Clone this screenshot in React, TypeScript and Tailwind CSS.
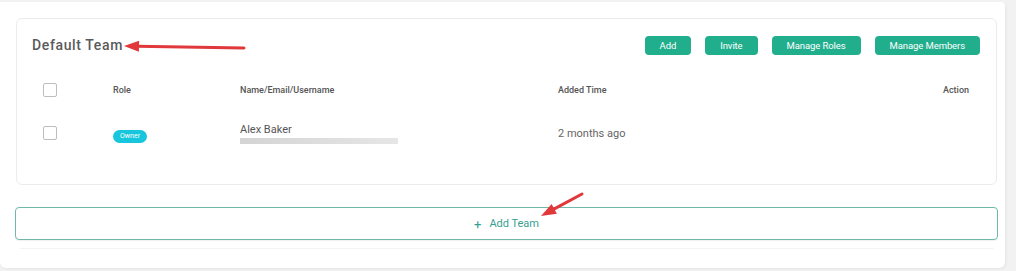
import React from "react";

const buttons = ["Add", "Invite", "Manage Roles", "Manage Members"];

function Checkbox() {
  return <span className="block h-[14px] w-[14px] rounded-[2px] border border-[#bdbdbd] bg-white" />;
}

function RedArrow({ className, x1, y1, x2, y2 }: { className: string; x1: number; y1: number; x2: number; y2: number }) {
  // arrow pointing to (x2, y2)
  const dx = x2 - x1;
  const dy = y2 - y1;
  const len = Math.sqrt(dx * dx + dy * dy);
  const ux = dx / len;
  const uy = dy / len;
  const hl = 15;
  const hw = 5.5;
  const bx = x2 - ux * hl;
  const by = y2 - uy * hl;
  const p1 = `${bx - uy * hw},${by + ux * hw}`;
  const p2 = `${bx + uy * hw},${by - ux * hw}`;
  return (
    <svg className={className} width="140" height="40" viewBox="0 0 140 40">
      <line x1={x1} y1={y1} x2={bx + ux * 2} y2={by + uy * 2} stroke="#e0383b" strokeWidth="3" strokeLinecap="round" />
      <polygon points={`${x2},${y2} ${p1} ${p2}`} fill="#e0383b" />
    </svg>
  );
}

export default function App() {
  return (
    <div className="h-[271px] w-[1016px] overflow-hidden bg-[#f2f2f2] pt-[2px] font-['Roboto',sans-serif]">
      <div className="relative h-[266px] w-[1005px] rounded-b-[6px] rounded-tr-[4px] bg-white pl-[16px] pr-[8px] pt-[16px] shadow-[1px_1px_3px_rgba(0,0,0,0.06)]">
        <div className="h-[167px] rounded-[6px] border border-[#ececec] bg-white">
          <div className="flex h-[52px] items-center justify-between pl-[15px] pr-[16px]">
            <h2 className="text-[14px] font-medium tracking-[0.045em] text-[#5a5a5a]">Default Team</h2>
            <div className="flex gap-[14px]">
              {buttons.map((b) => (
                <button
                  key={b}
                  className="h-[19px] rounded-[4px] bg-[#21ae8d] px-[15px] text-[9.5px] leading-[19px] tracking-[-0.01em] text-white"
                >
                  {b}
                </button>
              ))}
            </div>
          </div>
          <div className="grid grid-cols-[70px_127px_318px_1fr_auto] items-center pl-[26px] pr-[27px] text-[9px] font-medium text-[#555]">
            <div className="flex h-[38px] items-center">
              <Checkbox />
            </div>
            <div className="pt-[2px]">Role</div>
            <div className="pt-[2px]">Name/Email/Username</div>
            <div className="pt-[2px]">Added Time</div>
            <div className="pt-[2px]">Action</div>
          </div>
          <div className="grid grid-cols-[70px_127px_318px_1fr_auto] items-center pl-[26px] pr-[27px]">
            <div className="flex h-[48px] items-center">
              <Checkbox />
            </div>
            <div>
              <span className="inline-block h-[13px] rounded-full bg-[#17c6dc] px-[7px] text-[7px] leading-[13px] text-white">
                Owner
              </span>
            </div>
            <div>
              <div className="text-[11px] leading-[14px] text-[#555]">Alex Baker</div>
              <div className="mt-[1px] h-[6px] w-[158px] bg-gradient-to-r from-[#d4d4d4] to-[#e6e6e6]" />
            </div>
            <div className="pt-[3px] text-[11px] text-[#666]">2 months ago</div>
            <div />
          </div>
        </div>
        <button className="mt-[22px] -ml-[1px] flex h-[33px] w-[983px] items-center justify-center gap-[8px] rounded-[4px] border border-[#6fb9ab] bg-white pt-[2px] text-[11px] text-[#36a08f] shadow-[0_1px_1px_rgba(0,0,0,0.06)]">
          <span className="text-[13px]">+</span>
          <span>Add Team</span>
        </button>
        <div className="mx-[4px] mt-[8px] h-px bg-[#f3f3f3]" />
        <RedArrow className="absolute left-[112px] top-[24px]" x1={132} y1={22} x2={12} y2={20} />
        <RedArrow className="absolute left-[530px] top-[182px]" x1={52} y1={10} x2={11} y2={32} />
      </div>
    </div>
  );
}
